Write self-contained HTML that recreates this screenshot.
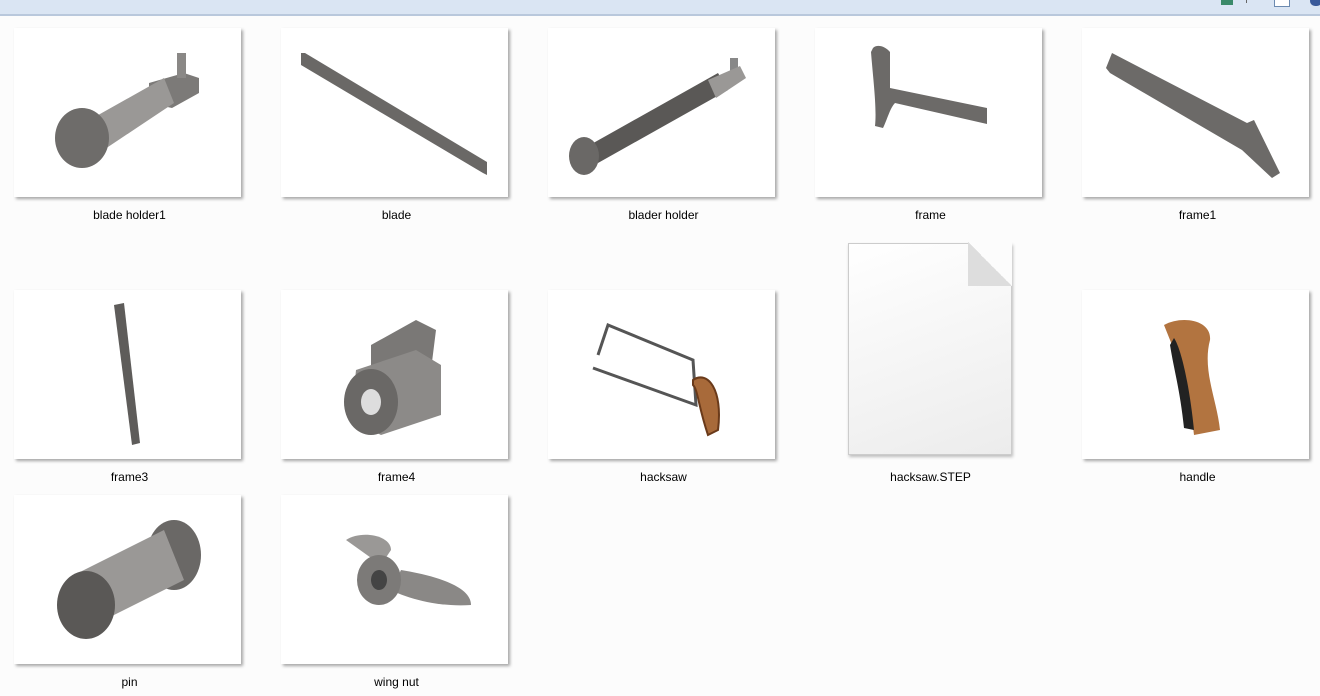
<!DOCTYPE html>
<html><head><meta charset="utf-8"><style>
body{margin:0;width:1320px;height:696px;background:#fcfcfc;position:relative;overflow:hidden;font-family:"Liberation Sans",sans-serif;}
.top{position:absolute;left:0;top:0;width:1320px;height:14px;background:#dae5f3;border-bottom:2px solid #b9c8dc;}
.t{position:absolute;width:227px;height:169px;background:#fff;box-shadow:2px 2px 3px rgba(0,0,0,.35);}
.t svg{position:absolute;left:0;top:0}
.l{position:absolute;width:267px;text-align:center;font-size:12px;color:#000;}
</style></head><body>
<div class="top">
<div style="position:absolute;left:1221px;top:0;width:12px;height:5px;background:#3b8a6a"></div>
<div style="position:absolute;left:1246px;top:0;width:1px;height:3px;background:#666"></div>
<div style="position:absolute;left:1274px;top:0;width:14px;height:6px;background:#fff;border:1px solid #6c8ab0;border-top:0"></div>
<div style="position:absolute;left:1310px;top:-4px;width:12px;height:10px;border-radius:6px;background:#3a5a9a"></div>
</div>

<div class="t" style="left:14px;top:28px"><svg width="227" height="169">
<polygon points="135,55 170,45 185,50 185,65 158,80 135,75" fill="#7c7a78"/>
<rect x="163" y="25" width="9" height="25" fill="#8a8886"/>
<polygon points="70,95 150,50 160,75 85,125" fill="#9a9896"/>
<ellipse cx="68" cy="110" rx="27" ry="30" fill="#6e6c6a"/></svg></div>
<div class="l" style="left:-4px;top:208px">blade holder1</div>

<div class="t" style="left:281px;top:28px"><svg width="227" height="169">
<polygon points="20,25 24,25 206,134 206,147 202,145 20,37" fill="#6a6866"/></svg></div>
<div class="l" style="left:263px;top:208px">blade</div>

<div class="t" style="left:548px;top:28px"><svg width="227" height="169">
<polygon points="40,118 170,45 180,62 50,135" fill="#5a5856"/>
<rect x="182" y="30" width="8" height="15" fill="#888"/>
<polygon points="160,52 192,38 198,50 168,70" fill="#9a9896"/>
<ellipse cx="36" cy="128" rx="15" ry="19" fill="#6a6866"/></svg></div>
<div class="l" style="left:530px;top:208px">blader holder</div>

<div class="t" style="left:815px;top:28px"><svg width="227" height="169">
<path d="M58,20 C62,16 70,18 75,24 L75,60 L172,80 L172,96 L80,75 C75,80 72,92 68,100 L60,98 C62,80 58,50 56,24 Z" fill="#6c6a68"/></svg></div>
<div class="l" style="left:797px;top:208px">frame</div>

<div class="t" style="left:1082px;top:28px"><svg width="227" height="169">
<polygon points="24,40 30,25 165,95 172,92 198,145 190,150 160,122 28,45" fill="#6c6a68"/></svg></div>
<div class="l" style="left:1064px;top:208px">frame1</div>

<div class="t" style="left:14px;top:290px"><svg width="227" height="169">
<polygon points="100,15 110,13 126,153 118,155" fill="#5e5c5a"/></svg></div>
<div class="l" style="left:-4px;top:470px">frame3</div>

<div class="t" style="left:281px;top:290px"><svg width="227" height="169">
<polygon points="90,55 135,30 155,40 150,80 110,100 90,95" fill="#7a7876"/>
<polygon points="75,80 135,60 160,75 160,125 100,145 70,130" fill="#8c8a88"/>
<ellipse cx="90" cy="112" rx="27" ry="33" fill="#6a6866"/>
<ellipse cx="90" cy="112" rx="10" ry="13" fill="#ddd"/></svg></div>
<div class="l" style="left:263px;top:470px">frame4</div>

<div class="t" style="left:548px;top:290px"><svg width="227" height="169" fill="none" stroke="#555" stroke-width="3">
<path d="M50,65 L60,35 L145,70 L148,115 L45,78"/>
<path d="M145,90 C160,80 175,100 170,140 L160,145 C150,115 150,100 145,95 Z" fill="#a86a3a" stroke="#6a3a1a" stroke-width="2"/></svg></div>
<div class="l" style="left:530px;top:470px">hacksaw</div>

<div style="position:absolute;left:848px;top:243px;width:162px;height:210px;background:linear-gradient(160deg,#fff,#ececec);border:1px solid #ccc;box-shadow:1px 2px 3px rgba(0,0,0,.25)"></div>
<div style="position:absolute;left:968px;top:242px;width:44px;height:44px;background:linear-gradient(225deg,#fcfcfc 50%,#ddd 50%)"></div>
<div class="l" style="left:797px;top:470px">hacksaw.STEP</div>

<div class="t" style="left:1082px;top:290px"><svg width="227" height="169">
<path d="M82,35 C100,25 130,30 128,50 C120,80 135,110 138,140 L112,145 C108,110 100,70 90,55 Z" fill="#b27440"/>
<path d="M92,48 C100,60 108,100 112,140 L102,138 C98,100 92,80 88,55 Z" fill="#222"/></svg></div>
<div class="l" style="left:1064px;top:470px">handle</div>

<div class="t" style="left:14px;top:495px"><svg width="227" height="169">
<ellipse cx="160" cy="60" rx="27" ry="35" fill="#6a6866"/>
<polygon points="60,80 150,35 170,85 80,130" fill="#9a9896"/>
<ellipse cx="72" cy="110" rx="29" ry="34" fill="#5a5856"/></svg></div>
<div class="l" style="left:-4px;top:675px">pin</div>

<div class="t" style="left:281px;top:495px"><svg width="227" height="169">
<path d="M65,45 C80,35 110,40 110,55 L100,70 Z" fill="#9a9896"/>
<path d="M120,75 C150,80 190,90 190,110 C160,112 130,105 110,95 Z" fill="#8a8886"/>
<ellipse cx="98" cy="85" rx="22" ry="25" fill="#7c7a78"/>
<ellipse cx="98" cy="85" rx="8" ry="10" fill="#444"/></svg></div>
<div class="l" style="left:263px;top:675px">wing nut</div>
</body></html>
